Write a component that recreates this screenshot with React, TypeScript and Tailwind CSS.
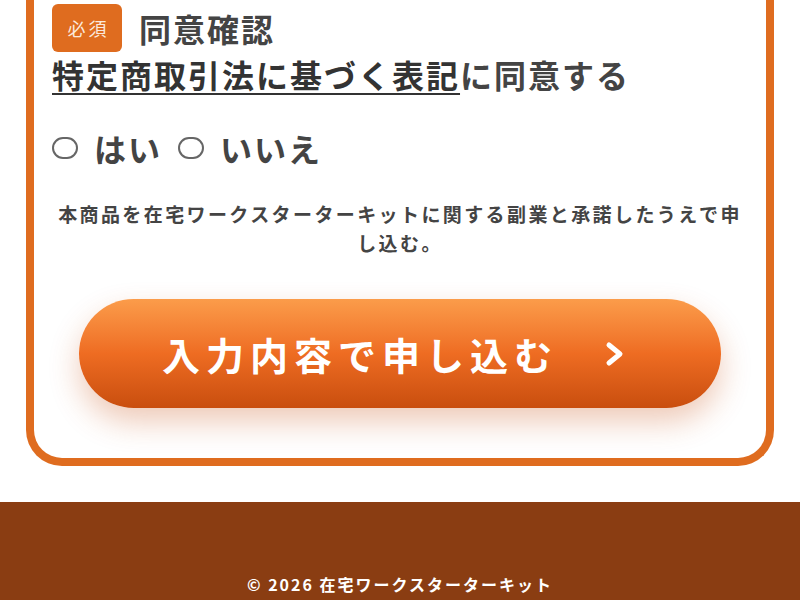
import React from "react";

function Radio({ label }: { label: string }) {
  return (
    <label className="flex items-center">
      <span className="inline-block w-[26px] h-[22px] rounded-full border-2 border-[#666]" />
      <span className="ml-[16px]">{label}</span>
    </label>
  );
}

export default function App() {
  return (
    <div className="min-h-[600px] bg-white font-['Noto_Sans_CJK_JP',sans-serif] text-[#444]">
      <div className="mx-[26px] border-[8px] border-t-0 border-[#DF6C1F] rounded-b-[36px] bg-white px-[18px] pt-[4px] pb-[50px]">
        <div className="flex items-center h-[48px]">
          <span className="flex items-center justify-center w-[70px] h-[48px] rounded-[6px] bg-[#DF6C1F] text-[#fbe9dc] text-[18px] tracking-[3px] pl-[3px]">
            必須
          </span>
          <h2 className="ml-[17px] text-[32px] font-bold tracking-[2px] leading-[40px]">同意確認</h2>
        </div>
        <p className="mt-[2px] text-[32px] font-bold tracking-[2px] leading-[40px] whitespace-nowrap">
          <span className="underline decoration-2 underline-offset-[5px] text-[#333]">特定商取引法に基づく表記</span>
          に同意する
        </p>
        <div className="mt-[34px] flex items-center gap-[16px] text-[32px] font-bold tracking-[2px] leading-[40px]">
          <Radio label="はい" />
          <Radio label="いいえ" />
        </div>
        <p className="mt-[31px] text-center text-[19px] font-bold tracking-[2.4px] leading-[29px]">
          本商品を在宅ワークスターターキットに関する副業と承諾したうえで申し込む。
        </p>
        <button className="mt-[42px] mx-auto flex items-center justify-center w-[642px] h-[109px] rounded-full bg-gradient-to-b from-[#FB9C4A] via-[#EE6C22] to-[#C94E0E] text-white shadow-[0_14px_30px_rgba(200,80,20,0.3)] pr-[12px]">
          <span className="text-[38px] font-bold tracking-[6px] leading-none">入力内容で申し込む</span>
          <svg className="ml-[46px]" width="22" height="26" viewBox="0 0 22 26" fill="none">
            <polyline points="5,4 16,13 5,22" stroke="white" strokeWidth="5" strokeLinecap="round" strokeLinejoin="round" />
          </svg>
        </button>
      </div>
      <footer className="mt-[36px] bg-[#8A3D12] pt-[70px] pb-[20px] text-center text-white text-[16px] font-bold tracking-[2px] leading-[24px]">
        © 2026 在宅ワークスターターキット
      </footer>
    </div>
  );
}
